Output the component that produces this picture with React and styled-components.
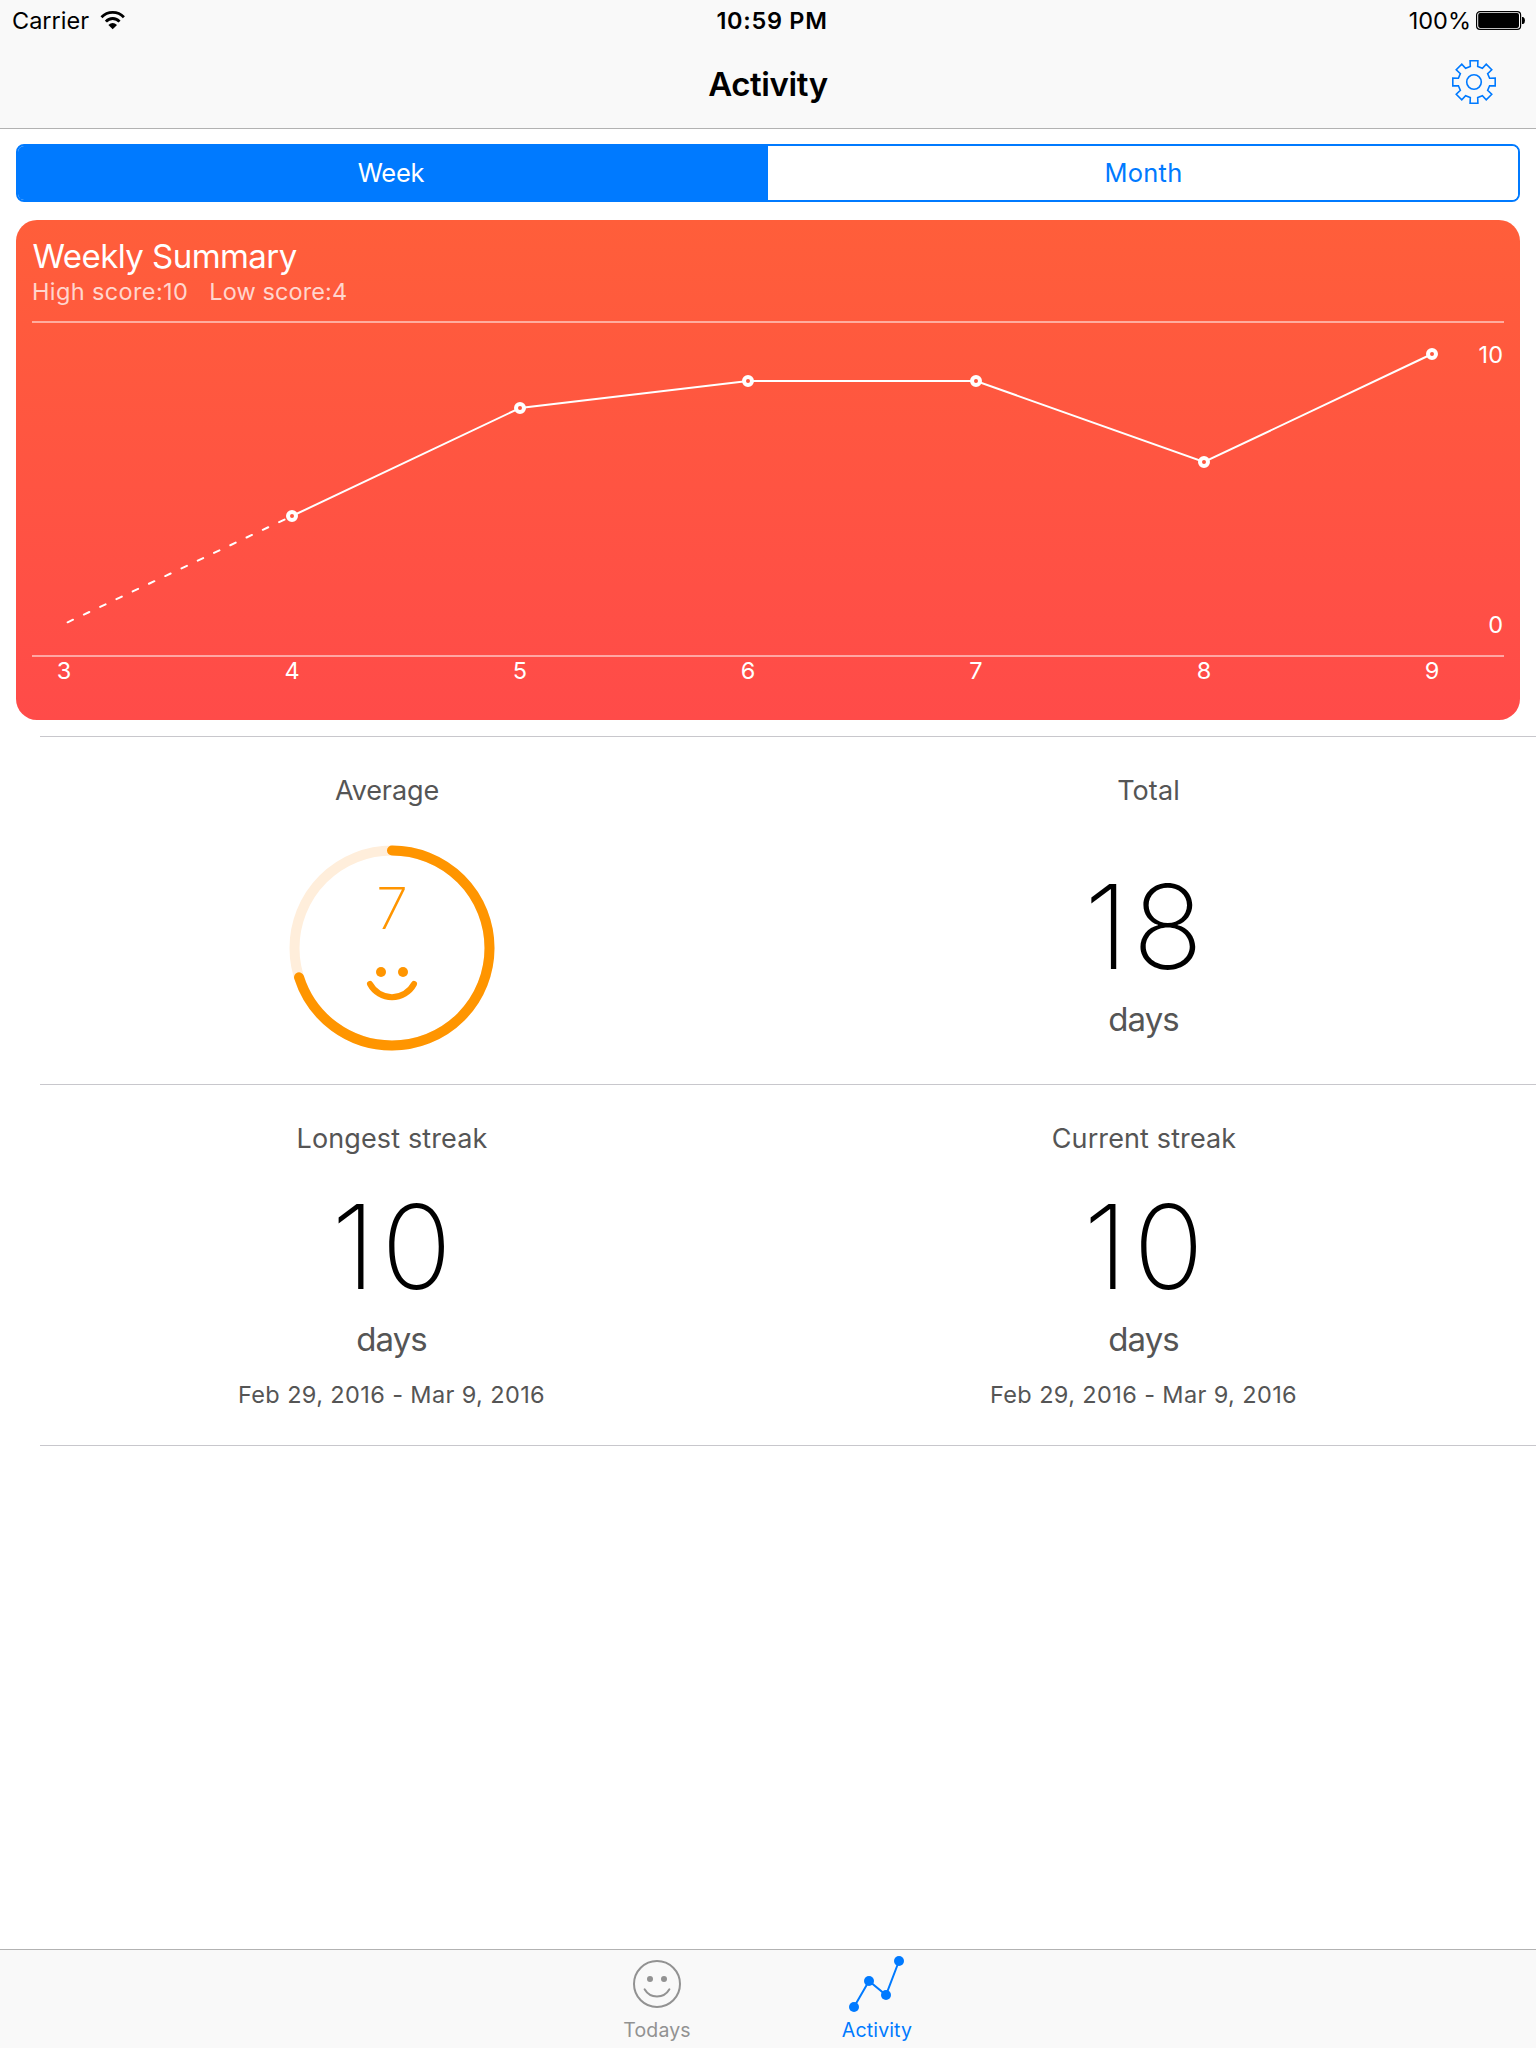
import React from 'react';
import styled, { createGlobalStyle } from 'styled-components';

const BLUE = '#007aff';
const ORANGE = '#ff9500';
const BAR = '#f9f9f9';
const HAIRLINE = '#b2b2b2';
const GREY_TEXT = '#555555';

const GlobalStyle = createGlobalStyle`
  body {
    margin: 0;
    background: #fff;
    font-family: Inter, "Liberation Sans", sans-serif;
    color: #000;
  }
  * { box-sizing: border-box; }
  svg { display: block; flex: none; }
`;

const Screen = styled.div`
  display: flex;
  flex-direction: column;
  width: 1536px;
  height: 2048px;
  overflow: hidden;
`;

/* ---------- top bars ---------- */

const Header = styled.header`
  height: 129px;
  background: ${BAR};
  border-bottom: 1px solid ${HAIRLINE};
`;

const StatusBar = styled.div`
  display: grid;
  grid-template-columns: 1fr auto 1fr;
  height: 40px;
  padding: 0 10px 0 12px;
  font-size: 23.5px;
  line-height: 41px;
`;

const StatusGroup = styled.div`
  display: flex;
  justify-content: ${(p) => (p.$end ? 'flex-end' : 'flex-start')};
  gap: ${(p) => (p.$end ? 5 : 11)}px;

  svg { margin-top: 10px; }
`;

const Clock = styled.div`
  padding-left: 6px;
  font-weight: 600;
  letter-spacing: 0.69px;
`;

const NavBar = styled.div`
  display: grid;
  grid-template-columns: 1fr auto 1fr;
  height: 88px;
  padding: 0 40px;
`;

const NavTitle = styled.h1`
  grid-column: 2;
  margin: 0;
  font-size: 33px;
  line-height: 88px;
  font-weight: 600;
  letter-spacing: -0.4px;
`;

const IconButton = styled.button`
  grid-column: 3;
  justify-self: end;
  align-self: start;
  margin: 20px 0 0;
  padding: 0;
  border: 0;
  background: none;
  color: ${BLUE};
`;

/* ---------- content ---------- */

const Content = styled.main`
  flex: 1;
  display: flex;
  flex-direction: column;
  padding-top: 15px;
`;

const Segmented = styled.div`
  display: grid;
  grid-template-columns: 1fr 1fr;
  height: 58px;
  margin: 0 16px;
  border: 2px solid ${BLUE};
  border-radius: 8px;
  overflow: hidden;
`;

const Segment = styled.button`
  margin: 0;
  padding: 0 ${(p) => (p.$active ? 4 : 0)}px 0 ${(p) => (p.$active ? 0 : 1)}px;
  border: 0;
  font: inherit;
  font-size: 25.5px;
  line-height: 54px;
  letter-spacing: ${(p) => p.$tracking}px;
  color: ${(p) => (p.$active ? '#fff' : BLUE)};
  background: ${(p) => (p.$active ? BLUE : '#fff')};
`;

const Card = styled.section`
  height: 500px;
  margin: 18px 16px 16px;
  padding: 15px 16px 0;
  border-radius: 21px;
  color: #fff;
  background: linear-gradient(#ff5e3a, #ff4b49);
`;

const CardTitle = styled.h2`
  margin: 0;
  padding-left: 0.5px;
  font-size: 33px;
  line-height: 42px;
  font-weight: 400;
  letter-spacing: -0.55px;
`;

const Scores = styled.div`
  display: flex;
  height: 44px;
  gap: 21px;
  color: rgba(255, 255, 255, 0.75);
  font-size: 23.5px;
  line-height: 29px;
`;

const Score = styled.span`
  letter-spacing: ${(p) => p.$tracking}px;
`;

const Plot = styled.div`
  display: flex;
  justify-content: space-between;
  height: 336px;
  border: 2px solid rgba(255, 255, 255, 0.5);
  border-width: 2px 0;
`;

const YAxis = styled.div`
  display: flex;
  flex-direction: column;
  justify-content: space-between;
  align-items: flex-end;
  padding: 16px 1px 14px 0;
  font-size: 23.5px;
  line-height: 32px;
`;

const XAxis = styled.div`
  display: flex;
  justify-content: space-between;
  padding: 0 60px 0 20px;
  font-size: 23.5px;
  line-height: 27px;
`;

const Tick = styled.span`
  width: 24px;
  text-align: center;
`;

const StatsRow = styled.section`
  display: flex;
  height: ${(p) => p.$height}px;
  margin-left: 40px;
  border-top: 1px solid #c8c7cc;
  border-bottom: ${(p) => (p.$last ? '1px solid #c8c7cc' : '0')};
`;

const Stat = styled.div`
  display: flex;
  flex-direction: column;
  align-items: center;
  width: 752px;
  padding-top: 34px;

  &:first-child { margin-left: -24px; }
`;

const StatTitle = styled.h3`
  margin: 0;
  padding-left: ${(p) => Math.max(p.$nudge, 0)}px;
  padding-right: ${(p) => Math.max(-p.$nudge, 0)}px;
  color: ${GREY_TEXT};
  font-size: 27px;
  line-height: 40px;
  font-weight: 400;
  letter-spacing: ${(p) => p.$tracking}px;
`;

const BigNumber = styled.div`
  margin-top: ${(p) => p.$top}px;
  margin-right: -${(p) => p.$tracking - 1}px;
  font-size: 117px;
  line-height: 120px;
  font-weight: 200;
  letter-spacing: ${(p) => p.$tracking}px;
`;

const Unit = styled.div`
  margin-top: 10.5px;
  padding-right: 1px;
  color: ${GREY_TEXT};
  font-size: 33px;
  line-height: 44px;
  letter-spacing: -0.9px;
`;

const DateRange = styled.div`
  margin-top: 17.5px;
  padding-right: 1px;
  color: ${GREY_TEXT};
  font-size: 23.5px;
  line-height: 32px;
  letter-spacing: 0.38px;
`;

const Gauge = styled.div`
  display: grid;
  margin-top: 34px;
  color: ${ORANGE};

  > * { grid-area: 1 / 1; }
`;

const GaugeValue = styled.div`
  justify-self: center;
  padding-top: 30px;
  font-size: 58px;
  line-height: 66px;
  font-weight: 200;
`;

/* ---------- tab bar ---------- */

const TabBar = styled.nav`
  display: flex;
  justify-content: center;
  height: 99px;
  padding-right: 2px;
  background: ${BAR};
  border-top: 1px solid ${HAIRLINE};
`;

const Tab = styled.div`
  display: flex;
  flex-direction: column;
  align-items: center;
  width: 220px;
  gap: 4px;
  color: ${(p) => (p.$active ? BLUE : '#929292')};
  font-size: 19.5px;
  line-height: 24px;
  letter-spacing: 0.15px;
`;

/* ---------- drawings ---------- */

const WifiIcon = () => (
  <svg width="26" height="20" viewBox="0 0 26 20">
    <g fill="none" stroke="#000" strokeWidth="2.8">
      <path d="M1.5 7.2A15.5 15.5 0 0 1 23.9 7.2" />
      <path d="M5.9 11.6A9 9 0 0 1 19.5 11.6" />
    </g>
    <path d="M8.4 14.9Q12.7 11 17 14.9L12.7 19.3Z" />
  </svg>
);

const BatteryIcon = () => (
  <svg width="50" height="20" viewBox="0 0 50 20">
    <rect x="0.6" y="1.6" width="44" height="17.8" rx="3.4" fill="#fff" stroke="#000" strokeWidth="1.2" />
    <rect x="2.2" y="3.1" width="40.8" height="14.8" rx="1.8" />
    <path d="M46 7h1.2q1.8 1 1.8 3.5t-1.8 3.5H46z" />
  </svg>
);

const gearPath = () => {
  const pts = [];
  for (let i = 0; i < 8; i += 1) {
    const a = (i * Math.PI) / 4;
    [[-3.7, -15.6], [-3.9, -21.2], [3.9, -21.2], [3.7, -15.6]].forEach(([x, y]) => {
      const px = 22 + x * Math.cos(a) - y * Math.sin(a);
      const py = 22 + x * Math.sin(a) + y * Math.cos(a);
      pts.push(`${px.toFixed(2)} ${py.toFixed(2)}`);
    });
  }
  return `M${pts.join('L')}Z`;
};

const GearIcon = () => (
  <svg width="44" height="44" viewBox="0 0 44 44" fill="none" stroke="currentColor" strokeWidth="1.6">
    <path d={gearPath()} />
    <circle cx="22" cy="22" r="7.3" />
  </svg>
);

const days = [3, 4, 5, 6, 7, 8, 9];
const scores = [0, 4, 8, 9, 9, 6, 10];
const points = scores.map((s, i) => [32 + i * 228, 301 - s * 27]);

const LineChart = () => (
  <svg width="1412" height="332" viewBox="0 0 1412 332">
    <g fill="none" stroke="#fff" strokeWidth="2">
      <line
        x1={points[0][0]}
        y1={points[0][1]}
        x2={points[1][0]}
        y2={points[1][1]}
        strokeLinecap="round"
        strokeDasharray="6 12"
        strokeDashoffset="-4"
      />
      <polyline points={points.slice(1).map((p) => p.join(',')).join(' ')} />
    </g>
    {points.slice(1).map(([x, y]) => (
      <circle key={x} cx={x} cy={y} r="4" fill="#ff583f" stroke="#fff" strokeWidth="4" />
    ))}
  </svg>
);

const Ring = ({ value }) => {
  const radius = 97.5;
  const length = 2 * Math.PI * radius;
  return (
    <svg width="206" height="206" viewBox="0 0 206 206" fill="none" strokeWidth="10">
      <circle cx="103" cy="103" r={radius} stroke="#ffeedb" />
      <circle
        cx="103"
        cy="103"
        r={radius}
        stroke="currentColor"
        strokeLinecap="round"
        strokeDasharray={`${length * value} ${length}`}
        transform="rotate(-90 103 103)"
      />
      <circle cx="92" cy="127" r="5" fill="currentColor" />
      <circle cx="114" cy="127" r="5" fill="currentColor" />
      <path d="M81 139A25 25 0 0 0 125 139" stroke="currentColor" strokeWidth="6" strokeLinecap="round" />
    </svg>
  );
};

const FaceIcon = () => (
  <svg width="64" height="64" viewBox="0 0 64 64" fill="none" stroke="currentColor" strokeWidth="2">
    <circle cx="32" cy="34" r="23" />
    <circle cx="25" cy="29" r="3" fill="currentColor" stroke="none" />
    <circle cx="39" cy="29" r="3" fill="currentColor" stroke="none" />
    <path d="M19.6 39.3A14.3 14.3 0 0 0 44.4 39.3" strokeLinecap="round" />
  </svg>
);

const ActivityIcon = () => (
  <svg width="64" height="64" viewBox="0 0 64 64" fill="currentColor">
    <polyline points="9,57 24,31 41,45 54,11" fill="none" stroke="currentColor" strokeWidth="2" />
    <circle cx="9" cy="57" r="5" />
    <circle cx="24" cy="31" r="5" />
    <circle cx="41" cy="45" r="5" />
    <circle cx="54" cy="11" r="5" />
  </svg>
);

const StreakStat = ({ title }) => (
  <Stat>
    <StatTitle $nudge={0} $tracking={0.12}>{title}</StatTitle>
    <BigNumber $top={27.5} $tracking={5.5}>10</BigNumber>
    <Unit>days</Unit>
    <DateRange>Feb 29, 2016 - Mar 9, 2016</DateRange>
  </Stat>
);

export default function App() {
  return (
    <Screen>
      <GlobalStyle />
      <Header>
        <StatusBar>
          <StatusGroup>
            <span>Carrier</span>
            <WifiIcon />
          </StatusGroup>
          <Clock>10:59 PM</Clock>
          <StatusGroup $end>
            <span>100%</span>
            <BatteryIcon />
          </StatusGroup>
        </StatusBar>
        <NavBar>
          <NavTitle>Activity</NavTitle>
          <IconButton aria-label="Settings">
            <GearIcon />
          </IconButton>
        </NavBar>
      </Header>

      <Content>
        <Segmented>
          <Segment $active $tracking={-0.25}>Week</Segment>
          <Segment $tracking={0.25}>Month</Segment>
        </Segmented>

        <Card>
          <CardTitle>Weekly Summary</CardTitle>
          <Scores>
            <Score $tracking={0.38}>High score:10</Score>
            <Score $tracking={0.1}>Low score:4</Score>
          </Scores>
          <Plot>
            <LineChart />
            <YAxis>
              <span>10</span>
              <span>0</span>
            </YAxis>
          </Plot>
          <XAxis>
            {days.map((d) => (
              <Tick key={d}>{d}</Tick>
            ))}
          </XAxis>
        </Card>

        <StatsRow $height={348}>
          <Stat>
            <StatTitle $nudge={-10} $tracking={-0.1}>Average</StatTitle>
            <Gauge>
              <Ring value={0.7} />
              <GaugeValue>7</GaugeValue>
            </Gauge>
          </Stat>
          <Stat>
            <StatTitle $nudge={9} $tracking={0.1}>Total</StatTitle>
            <BigNumber $top={55.5} $tracking={4}>18</BigNumber>
            <Unit>days</Unit>
          </Stat>
        </StatsRow>
        <StatsRow $height={362} $last>
          <StreakStat title="Longest streak" />
          <StreakStat title="Current streak" />
        </StatsRow>
      </Content>

      <TabBar>
        <Tab>
          <FaceIcon />
          <span>Todays</span>
        </Tab>
        <Tab $active>
          <ActivityIcon />
          <span>Activity</span>
        </Tab>
      </TabBar>
    </Screen>
  );
}
